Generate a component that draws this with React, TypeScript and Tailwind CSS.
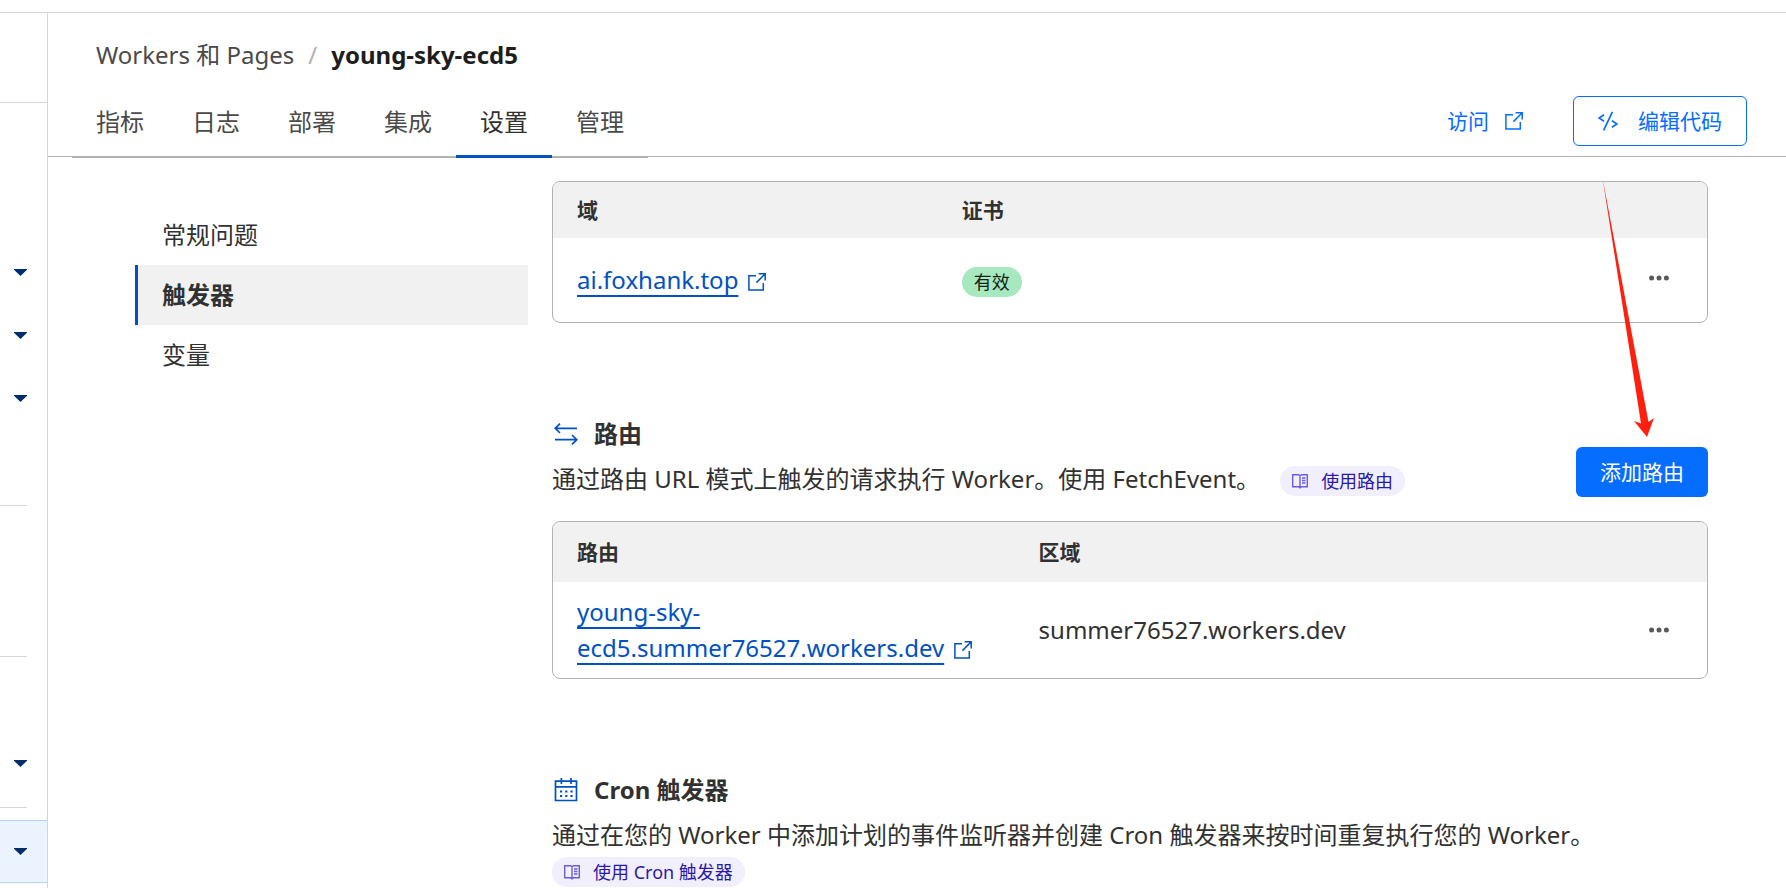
import type { ReactNode } from "react";
import clsx from "clsx";

const tabs = ["指标", "日志", "部署", "集成", "设置", "管理"];
const sections = ["常规问题", "触发器", "变量"];

function Caret() {
  return (
    <svg className="ml-[14px] h-[7px] w-[13px] fill-[#002e6b]" viewBox="0 0 13 7">
      <path d="M0 0h13v.8L6.5 7 0 .8z" />
    </svg>
  );
}

function ExternalIcon({ className }: { className?: string }) {
  return (
    <svg
      className={clsx("h-[18px] w-[18px]", className)}
      viewBox="0 0 18 18"
      fill="none"
      stroke="currentColor"
      strokeWidth="1.5"
    >
      <path d="M8 2.7H.9v14.4h14.4V10M10.6 .8h6.6v6.6M17 1 8.4 9.6" />
    </svg>
  );
}

function CodeIcon() {
  return (
    <svg
      className="h-5 w-5"
      viewBox="0 0 20 20"
      fill="none"
      stroke="currentColor"
      strokeWidth="1.7"
    >
      <path d="M6 3.8 1 7l5 3.2M14 9.8l5 3.2-5 3.2M14.4 .8 5.6 19.4" />
    </svg>
  );
}

function BookIcon() {
  return (
    <svg
      className="h-4 w-4 text-[#6a5be2]"
      viewBox="0 0 16 16"
      fill="none"
      stroke="currentColor"
      strokeWidth="1.4"
    >
      <path d="M.7 1.7h5.6L8 2.7l1.7-1h5.6v12H9.5L8 14.8l-1.5-1.1H.7zM8 2.7v12M10 5h3.5M10 7.5h3.5M10 10h3.5" />
    </svg>
  );
}

function RoutesIcon() {
  return (
    <svg
      className="h-6 w-6"
      viewBox="0 0 24 24"
      fill="none"
      stroke="currentColor"
      strokeWidth="1.7"
    >
      <path d="M23 6.3H1.2M6 1.6 1.2 6.3 6 11M1 17.7h22M18 13l4.8 4.7L18 22.4" />
    </svg>
  );
}

function CalendarIcon() {
  return (
    <svg
      className="h-6 w-6"
      viewBox="0 0 24 24"
      fill="none"
      stroke="currentColor"
      strokeWidth="1.7"
    >
      <path d="M1.5 3.2h21v19.3h-21zM1.5 8.8h21M7.4 0v6M17 0v6" />
      <path d="M6 13.5h12.6M6 18h12.6" strokeWidth="2.2" strokeDasharray="2.2 3" />
    </svg>
  );
}

function MoreButton() {
  return (
    <button type="button" aria-label="更多" className="block px-6 py-3 text-[#595959]">
      <svg className="h-[6px] w-5 fill-current" viewBox="0 0 20 6">
        <circle cx="2.6" cy="3" r="2.5" />
        <circle cx="10" cy="3" r="2.5" />
        <circle cx="17.4" cy="3" r="2.5" />
      </svg>
    </button>
  );
}

function DocTag({ children }: { children: ReactNode }) {
  return (
    <a
      href="#docs"
      className="mt-1 inline-flex h-[30px] items-center gap-[13px] rounded-full bg-[#f2effd] px-3 text-lg leading-none text-[#2b19a5]"
    >
      <BookIcon />
      {children}
    </a>
  );
}

function ExternalLink({ children }: { children: ReactNode }) {
  return (
    <a href="#open" className="text-[#0051c3]">
      <span className="underline decoration-2 underline-offset-[6px]">{children}</span>
      <ExternalIcon className="ml-[10px] inline-block align-[-2px]" />
    </a>
  );
}

function SectionTitle({ icon, children }: { icon: ReactNode; children: ReactNode }) {
  return (
    <h2 className="flex items-center gap-4 pl-[2px] leading-9 font-bold">
      <span className="text-[#0051c3]">{icon}</span>
      {children}
    </h2>
  );
}

function Sidebar() {
  return (
    <aside className="w-12 shrink-0 border-r border-[#d5d5d5]">
      <div className="h-[90px] border-b border-[#d5d5d5]" />
      <div className="flex flex-col gap-14 pt-[166px]">
        <Caret />
        <Caret />
        <Caret />
      </div>
      <div className="mr-5 h-[104px] border-b border-[#d5d5d5]" />
      <div className="mr-5 h-[151px] border-b border-[#d5d5d5]" />
      <div className="mr-5 h-[151px] border-b border-[#d5d5d5] pt-[103px]">
        <Caret />
      </div>
      <div className="mt-3 flex h-[63px] items-center border-y border-[#b3d4ff] bg-[#ebf3ff]">
        <Caret />
      </div>
    </aside>
  );
}

function Header() {
  return (
    <header className="flex h-36 items-end justify-between border-b border-[#b2b2b2] pr-[39px]">
      <div className="pl-6">
        <nav className="flex items-center gap-[14px] pb-[15px] pl-6 leading-9">
          <a href="#workers" className="text-[#4a4a4a]">
            Workers 和 Pages
          </a>
          <span className="text-[#b2b2b2]">/</span>
          <span className="font-bold text-[#1d1d1d]">young-sky-ecd5</span>
        </nav>
        <nav className="-mb-[2px] flex">
          {tabs.map((tab) => (
            <a
              key={tab}
              href="#tab"
              className={clsx(
                "flex h-[70px] items-center px-6",
                tab === "设置"
                  ? "border-b-3 border-[#0051c3] text-[#313131]"
                  : "border-b-2 border-[#b2b2b2] text-[#4a4a4a]",
              )}
            >
              {tab}
            </a>
          ))}
        </nav>
      </div>
      <div className="mb-[10px] flex items-center gap-[50px] text-[21px] text-[#056dff]">
        <a href="#visit" className="flex items-center gap-4">
          访问
          <ExternalIcon />
        </a>
        <button
          type="button"
          className="flex h-[50px] items-center gap-5 rounded-md border border-[#056dff] px-6"
        >
          <CodeIcon />
          编辑代码
        </button>
      </div>
    </header>
  );
}

function SideNav() {
  return (
    <nav className="mt-12 w-[393px] shrink-0">
      {sections.map((item) => (
        <a
          key={item}
          href="#section"
          className={clsx(
            "flex h-[60px] items-center border-l-3 pl-6",
            item === "触发器" ? "border-[#0051c3] bg-[#f1f1f1] font-bold" : "border-transparent",
          )}
        >
          {item}
        </a>
      ))}
    </nav>
  );
}

function DataTable({ children }: { children: ReactNode }) {
  return (
    <div className="overflow-hidden rounded-lg border border-[#b2b2b2]">
      <table className="w-full table-fixed text-left">{children}</table>
    </div>
  );
}

function Arrow() {
  return (
    <svg
      className="pointer-events-none absolute top-5 right-[53px] h-[260px] w-[54px] fill-[#ff1f0f]"
      viewBox="0 0 54 260"
    >
      <path d="M1.5 1 47.5 245 53 241 46 260 33 244 40 246.5z" />
    </svg>
  );
}

export default function App() {
  return (
    <div className="flex h-screen flex-col overflow-hidden bg-white pt-3 font-['Noto_Sans','Noto_Sans_CJK_SC',sans-serif] text-2xl text-[#313131]">
      <div className="flex flex-1 border-t border-[#d5d5d5]">
        <Sidebar />
        <div className="min-w-0 flex-1">
          <Header />
          <div className="flex gap-6 pr-[78px] pl-[87px]">
            <SideNav />
            <main className="relative min-w-0 flex-1 pt-6">
              <DataTable>
                <thead className="bg-[#f1f1f1] text-[21px]">
                  <tr className="h-14">
                    <th className="w-1/3 px-6">域</th>
                    <th className="px-6">证书</th>
                    <th className="w-[82px]" />
                  </tr>
                </thead>
                <tbody>
                  <tr className="h-[84px]">
                    <td className="px-6">
                      <ExternalLink>ai.foxhank.top</ExternalLink>
                    </td>
                    <td className="px-6 pt-1">
                      <span className="flex h-[30px] w-fit items-center rounded-full bg-[#a8e8bf] px-3 text-lg leading-none text-[#0f2417]">
                        有效
                      </span>
                    </td>
                    <td className="pb-1">
                      <MoreButton />
                    </td>
                  </tr>
                </tbody>
              </DataTable>

              <section className="mt-[93px]">
                <div className="flex items-end justify-between pb-6">
                  <div>
                    <SectionTitle icon={<RoutesIcon />}>路由</SectionTitle>
                    <div className="mt-[9px] flex items-center gap-5 leading-9">
                      <p>通过路由 URL 模式上触发的请求执行 Worker。使用 FetchEvent。</p>
                      <DocTag>使用路由</DocTag>
                    </div>
                  </div>
                  <button
                    type="button"
                    className="h-[50px] rounded-md bg-[#056dff] px-6 text-[21px] text-white"
                  >
                    添加路由
                  </button>
                </div>
                <DataTable>
                  <thead className="bg-[#f1f1f1] text-[21px]">
                    <tr className="h-[60px]">
                      <th className="w-2/5 px-6">路由</th>
                      <th className="px-6">区域</th>
                      <th className="w-[82px]" />
                    </tr>
                  </thead>
                  <tbody>
                    <tr className="h-24">
                      <td className="px-6 leading-9">
                        <ExternalLink>young-sky-ecd5.summer76527.workers.dev</ExternalLink>
                      </td>
                      <td className="px-6">summer76527.workers.dev</td>
                      <td>
                        <MoreButton />
                      </td>
                    </tr>
                  </tbody>
                </DataTable>
              </section>

              <section className="mt-[93px]">
                <SectionTitle icon={<CalendarIcon />}>Cron 触发器</SectionTitle>
                <p className="mt-[9px] leading-9">
                  通过在您的 Worker 中添加计划的事件监听器并创建 Cron 触发器来按时间重复执行您的 Worker。
                </p>
                <DocTag>使用 Cron 触发器</DocTag>
              </section>

              <Arrow />
            </main>
          </div>
        </div>
      </div>
    </div>
  );
}
